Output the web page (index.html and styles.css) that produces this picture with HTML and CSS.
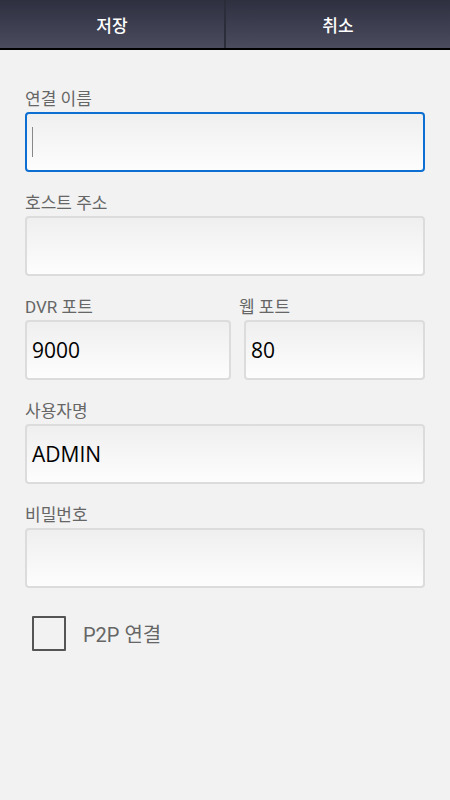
FILE: index.html
```html
<!DOCTYPE html>
<html lang="ko">
<head>
  <meta charset="UTF-8">
  <meta name="viewport" content="width=device-width, initial-scale=1.0">
  <title>연결 설정</title>
  <link rel="stylesheet" href="styles.css">
</head>
<body>
  <!-- Action Bar -->
  <div class="action-bar">
    <button class="action-btn">저장</button>
    <button class="action-btn">취소</button>
  </div>

  <!-- Connection Form -->
  <form class="form">
    <div class="field">
      <label>연결 이름</label>
      <div class="input active"><span class="caret"></span></div>
    </div>

    <div class="field">
      <label>호스트 주소</label>
      <div class="input"></div>
    </div>

    <div class="row">
      <div class="field port">
        <label>DVR 포트</label>
        <div class="input">9000</div>
      </div>
      <div class="field web">
        <label>웹 포트</label>
        <div class="input">80</div>
      </div>
    </div>

    <div class="field">
      <label>사용자명</label>
      <div class="input">ADMIN</div>
    </div>

    <div class="field">
      <label>비밀번호</label>
      <div class="input"></div>
    </div>

    <div class="check-row">
      <span class="checkbox"></span>
      <span class="check-label">P2P 연결</span>
    </div>
  </form>
</body>
</html>
```

FILE: styles.css
```css
/* General Styles */
body {
  margin: 0;
  font-family: Roboto, "Noto Sans CJK KR", sans-serif;
  background-color: #f2f2f2;
  width: 450px;
  height: 800px;
}

/* Action Bar */
.action-bar {
  display: flex;
  height: 48px;
  border-bottom: 2px solid #000;
  background: linear-gradient(#2e3040, #4a4c5e);
}

.action-btn {
  flex: 1;
  border: none;
  background: transparent;
  color: #fff;
  font-family: Roboto, "Noto Sans CJK KR", sans-serif;
  font-size: 17px;
  font-weight: 500;
  padding: 0;
}

.action-btn + .action-btn {
  border-left: 2px solid #2b2d3b;
}

/* Form */
.form {
  padding: 38px 25px 0;
}

.field {
  margin-bottom: 20px;
}

.field label {
  display: block;
  font-size: 17px;
  line-height: 22px;
  height: 24px;
  color: #666;
}

.input {
  box-sizing: border-box;
  height: 60px;
  border: 2px solid #dcdcdc;
  border-radius: 4px;
  background: linear-gradient(#efefef, #fdfdfd);
  display: flex;
  align-items: center;
  padding: 0 5px;
  font-family: "Open Sans", "Noto Sans CJK KR", sans-serif;
  font-size: 21px;
  color: #000;
}

.input.active {
  border-color: #0c6fd1;
}

.caret {
  width: 1px;
  height: 30px;
  background: #888;
}

.row {
  display: flex;
  gap: 13px;
}

.row .port {
  width: 206px;
}

.row .web {
  flex: 1;
}

.row .web label {
  margin-left: -5px;
}

/* P2P Checkbox */
.check-row {
  display: flex;
  align-items: center;
  gap: 17px;
  padding: 8px 0 0 7px;
}

.checkbox {
  box-sizing: border-box;
  width: 34px;
  height: 35px;
  border: 2px solid #555;
  border-radius: 1px;
}

.check-label {
  font-size: 20px;
  color: #666;
}
```
